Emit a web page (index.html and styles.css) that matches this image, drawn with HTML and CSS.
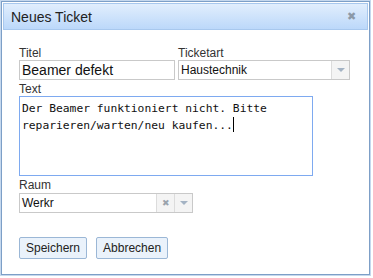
FILE: index.html
```html
<!DOCTYPE html>
<html lang="de">
<head>
  <meta charset="UTF-8" />
  <title>Neues Ticket</title>
  <link rel="stylesheet" href="styles.css">
</head>
<body>
  <div class="dialog">
    <div class="titlebar">
      <span class="title">Neues Ticket</span>
      <span class="close">&#x2716;</span>
    </div>

    <div class="content">
      <div class="row">
        <div class="field">
          <label>Titel</label>
          <input type="text" class="input title-input" value="Beamer defekt" />
        </div>
        <div class="field">
          <label>Ticketart</label>
          <div class="combo type-combo">
            <span class="combo-value">Haustechnik</span>
            <span class="combo-btn"><span class="arrow"></span></span>
          </div>
        </div>
      </div>

      <div class="field">
        <label>Text</label>
        <div class="textarea">Der Beamer funktioniert nicht. Bitte<br>reparieren/warten/neu kaufen...<span class="caret"></span></div>
      </div>

      <div class="field">
        <label>Raum</label>
        <div class="combo room-combo">
          <span class="combo-value">Werkr</span>
          <span class="combo-btn clear">&#x2716;</span>
          <span class="combo-btn"><span class="arrow"></span></span>
        </div>
      </div>

      <div class="btn-row">
        <button class="btn">Speichern</button>
        <button class="btn">Abbrechen</button>
      </div>
    </div>
  </div>
</body>
</html>
```

FILE: styles.css
```css
html, body {
  margin: 0;
  padding: 0;
  background: #fff;
}
body {
  font-family: 'Liberation Sans', Arial, sans-serif;
  font-size: 12px;
  color: #222;
}
.dialog {
  width: 369px;
  height: 274px;
  border: 1px solid #7d9fc7;
  box-shadow: 0 0 0 1px #c5d8ee;
  margin: 1px;
  background: #fff;
  box-sizing: border-box;
  display: flex;
  flex-direction: column;
}
.titlebar {
  margin: 1px;
  height: 27px;
  box-sizing: border-box;
  border: 1px solid #a8c8ee;
  background: linear-gradient(#e1eefd, #bcd8fa);
  display: flex;
  align-items: center;
  justify-content: space-between;
  padding: 0 11px 0 7px;
}
.title {
  font-size: 14px;
  color: #222;
}
.close {
  font-size: 11px;
  color: #8c99a8;
}
.content {
  padding: 15px 0 0 17px;
}
.row {
  display: flex;
  gap: 3px;
}
.field {
  display: flex;
  flex-direction: column;
}
label {
  font-size: 12px;
  color: #333;
  line-height: 14px;
}
.input {
  width: 156px;
  height: 20px;
  box-sizing: border-box;
  border: 1px solid #c9c9c9;
  padding: 0 2px;
  font-family: 'Liberation Sans', Arial, sans-serif;
  font-size: 14px;
  color: #111;
  margin: 0 0 2px;
}
.combo {
  display: flex;
  height: 20px;
  box-sizing: border-box;
  border: 1px solid #c9c9c9;
  margin-bottom: 2px;
}
.type-combo {
  width: 172px;
}
.room-combo {
  width: 174px;
  margin: 1px 0 0;
}
.combo-value {
  flex: 1;
  padding: 0 2px;
  font-size: 12px;
  line-height: 18px;
  color: #111;
}
.combo-btn {
  width: 17px;
  border-left: 1px solid #dcdcdc;
  background: #f4f4f4;
  display: flex;
  align-items: center;
  justify-content: center;
  font-size: 9px;
  color: #9aa3ad;
}
.arrow {
  width: 0;
  height: 0;
  border-left: 4px solid transparent;
  border-right: 4px solid transparent;
  border-top: 4px solid #a4b3c4;
}
.textarea {
  width: 294px;
  height: 80px;
  box-sizing: border-box;
  border: 1px solid #7eaaf0;
  padding: 3px 2px;
  font-family: 'DejaVu Sans Mono', monospace;
  font-size: 11.3px;
  line-height: 17px;
  color: #111;
  margin: 0 0 2px;
}
.caret {
  display: inline-block;
  width: 1px;
  height: 15px;
  background: #000;
  vertical-align: -3px;
}
.btn-row {
  display: flex;
  gap: 9px;
  margin-top: 24px;
}
.btn {
  height: 22px;
  padding: 0 6px;
  border: 1px solid #9bb7d6;
  border-radius: 2px;
  background: #eaf2fb;
  font-family: 'Liberation Sans', Arial, sans-serif;
  font-size: 12px;
  color: #222;
}
```
